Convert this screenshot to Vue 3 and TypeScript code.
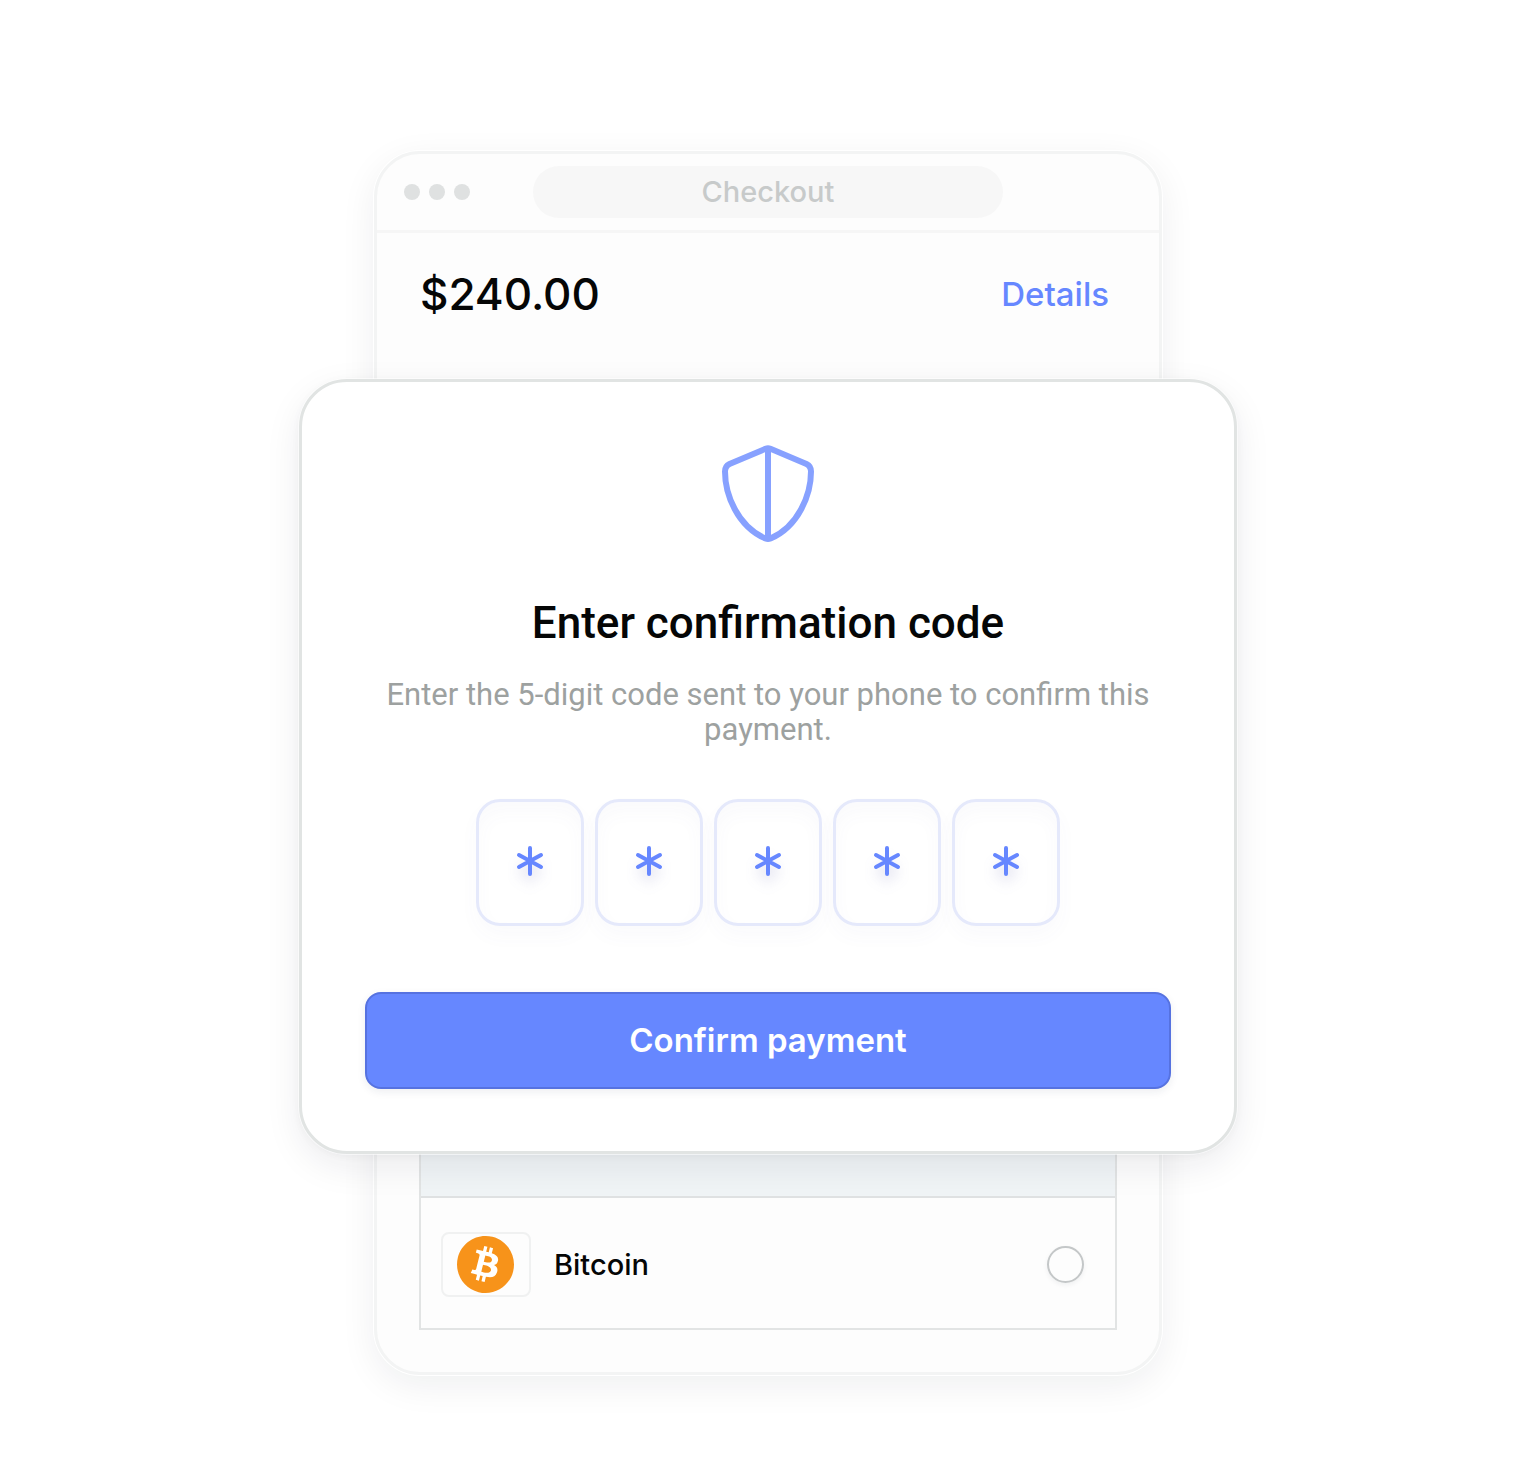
<script setup lang="ts">
import { ref } from 'vue'

const amount = '$240.00'
const digits = ref<string[]>(['', '', '', '', ''])
const method = ref<string>('')
</script>

<template>
  <main class="stage">
    <section class="browser" aria-label="Checkout">
      <header class="bar">
        <div class="dots"><i></i><i></i><i></i></div>
        <div class="address">Checkout</div>
      </header>
      <div class="summary">
        <strong class="amount">{{ amount }}</strong>
        <a class="details" href="#details">Details</a>
      </div>
      <div class="methods">
        <div class="panel"></div>
        <label class="method">
          <span class="logo">
            <svg viewBox="0 0 24 24" aria-hidden="true">
              <circle cx="12" cy="12" r="11.5" fill="#fff" />
              <path
                fill="#f7931a"
                d="M23.638 14.904c-1.602 6.43-8.113 10.34-14.542 8.736C2.67 22.05-1.244 15.525.362 9.105 1.962 2.67 8.475-1.243 14.9.358c6.43 1.605 10.342 8.115 8.738 14.548v-.002zm-6.35-4.613c.24-1.59-.974-2.45-2.64-3.03l.54-2.153-1.315-.33-.525 2.107c-.345-.087-.705-.167-1.064-.25l.526-2.127-1.32-.33-.54 2.165c-.285-.067-.565-.132-.84-.2l-1.815-.45-.35 1.407s.975.225.955.236c.535.136.63.486.615.766l-1.477 5.92c-.075.166-.24.406-.614.314.015.02-.96-.24-.96-.24l-.66 1.51 1.71.426.93.242-.54 2.19 1.32.327.54-2.17c.36.1.705.19 1.05.273l-.51 2.154 1.32.33.545-2.19c2.24.427 3.93.257 4.64-1.774.57-1.637-.03-2.58-1.217-3.196.854-.193 1.5-.76 1.68-1.93h.01zm-3.01 4.22c-.404 1.64-3.157.75-4.05.53l.72-2.9c.896.23 3.757.67 3.33 2.37zm.41-4.24c-.37 1.49-2.662.735-3.405.55l.654-2.64c.744.18 3.137.524 2.75 2.084v.006z"
              />
            </svg>
          </span>
          <span class="name">Bitcoin</span>
          <input v-model="method" class="radio" type="radio" name="method" value="bitcoin" />
        </label>
      </div>
    </section>

    <form class="dialog" aria-labelledby="dialog-title" @submit.prevent>
      <svg class="shield" viewBox="0 0 96 100" aria-hidden="true">
        <path
          d="M45.5 4.8Q48 3.8 50.5 4.8L86.500 20Q91 22.200 91 27.500C91 50 79 82 50.500 94.500Q48 95.500 45.500 94.500C17 82 5 50 5 27.500Q5 22.200 9.500 20ZM48 4V95"
        />
      </svg>
      <h1 id="dialog-title" class="title">Enter confirmation code</h1>
      <p class="hint">Enter the 5-digit code sent to your phone to confirm this payment.</p>
      <div class="code">
        <label v-for="(_, i) in digits" :key="i" class="cell">
          <input
            v-model="digits[i]"
            class="digit"
            type="text"
            inputmode="numeric"
            maxlength="1"
            :aria-label="`Digit ${i + 1}`"
          />
          <svg v-if="!digits[i]" class="star" viewBox="0 0 28 30" aria-hidden="true">
            <path d="M14 2V28M3 9L25 21M25 9L3 21" />
          </svg>
        </label>
      </div>
      <button class="confirm" type="submit">Confirm payment</button>
    </form>
  </main>
</template>

<style>
body {
  margin: 0;
  background: #fff;
}
</style>

<style scoped>
* {
  box-sizing: border-box;
}

.stage {
  display: grid;
  justify-items: center;
  align-items: start;
  padding: 151px 24px 88px;
  font-family: Inter, 'Liberation Sans', sans-serif;
  color: #050606;
}

.browser,
.dialog {
  grid-area: 1 / 1;
  width: 100%;
}

.browser {
  max-width: 788px;
  padding-bottom: 42px;
  border: 3px solid #f3f4f4;
  border-radius: 46px;
  background: #fdfdfd;
  box-shadow:
    0 0 0 1px #fff,
    0 10px 36px rgba(20, 30, 40, 0.07);
}

.bar {
  display: grid;
  grid-template-columns: 1fr 470px 1fr;
  align-items: center;
  height: 79px;
  border-bottom: 3px solid #f6f6f6;
}

.dots {
  display: flex;
  gap: 9px;
  padding-left: 27px;
}

.dots i {
  width: 16px;
  height: 16px;
  border-radius: 50%;
  background: #dfe1e1;
}

.address {
  border-radius: 26px;
  background: #f7f7f7;
  color: #c7caca;
  font-size: 29px;
  font-weight: 500;
  line-height: 52px;
  text-align: center;
}

.summary {
  display: flex;
  align-items: center;
  justify-content: space-between;
  height: 122px;
  padding: 0 50px 0 43px;
}

.amount {
  font-size: 44px;
  font-weight: 500;
}

.details {
  color: #6687ff;
  font-size: 33px;
  font-weight: 500;
  text-decoration: none;
}

.methods {
  margin: 44px 42px 0;
  border: 2px solid #e2e4e4;
}

.panel {
  height: 797px;
  border-bottom: 2px solid #dfe1e2;
  background: #f0f4f6;
}

.method {
  display: flex;
  align-items: center;
  gap: 23px;
  height: 130px;
  padding: 2px 31px 0 20px;
}

.logo {
  display: grid;
  place-items: center;
  width: 90px;
  height: 65px;
  padding-right: 2px;
  border: 2px solid #f0f1f1;
  border-radius: 8px;
}

.logo svg {
  width: 57px;
  height: 57px;
}

.name {
  flex: 1;
  font-size: 29px;
  font-weight: 500;
}

.radio {
  appearance: none;
  width: 37px;
  height: 37px;
  margin: 0;
  border: 2px solid #c4c7c8;
  border-radius: 50%;
  box-shadow: 0 2px 5px rgba(20, 40, 50, 0.06);
}

.radio:checked {
  border: 10px solid #6687ff;
}

.dialog {
  display: flex;
  flex-direction: column;
  align-items: center;
  max-width: 938px;
  margin-top: 228px;
  padding: 62px 63px;
  border: 3px solid #e1e4e3;
  border-radius: 48px;
  background: #fff;
  box-shadow:
    0 0 0 1px rgba(255, 255, 255, 0.6),
    0 2px 8px rgba(20, 30, 50, 0.04),
    0 12px 36px rgba(20, 30, 50, 0.08);
}

.shield {
  width: 96px;
  height: 100px;
  fill: none;
  stroke: #87a1ff;
  stroke-width: 6;
  stroke-linejoin: round;
}

.title {
  margin: 53px 0 28px;
  font-family: Roboto, 'Liberation Sans', sans-serif;
  font-size: 44px;
  font-weight: 500;
  line-height: 52px;
  text-align: center;
}

.hint {
  margin: 0;
  color: #9da1a0;
  font-family: Roboto, 'Liberation Sans', sans-serif;
  font-size: 31px;
  line-height: 35px;
  text-align: center;
}

.code {
  display: flex;
  justify-content: center;
  gap: 11px;
  margin: 52px 0 66px;
}

.cell {
  display: grid;
  place-items: center;
}

.digit,
.star {
  grid-area: 1 / 1;
}

.digit {
  width: 108px;
  height: 127px;
  padding: 0;
  border: 3px solid #e5e9fb;
  border-radius: 24px;
  outline: none;
  background: #fff;
  box-shadow:
    0 10px 20px rgba(80, 80, 160, 0.03),
    inset 0 10px 18px rgba(80, 80, 160, 0.03);
  color: #6687ff;
  font-family: inherit;
  font-size: 44px;
  text-align: center;
}

.star {
  width: 28px;
  height: 30px;
  margin-bottom: 3px;
  fill: none;
  stroke: #6687ff;
  stroke-width: 4;
  stroke-linecap: round;
  filter: drop-shadow(0 10px 6px rgba(80, 80, 160, 0.14));
  pointer-events: none;
}

.confirm {
  width: 100%;
  height: 97px;
  padding: 0 0 2px;
  border: 2px solid #5672e0;
  border-radius: 16px;
  background: #6687ff;
  box-shadow: 0 3px 8px rgba(20, 40, 80, 0.08);
  color: #fff;
  font-family: inherit;
  font-size: 33px;
  font-weight: 600;
}
</style>
